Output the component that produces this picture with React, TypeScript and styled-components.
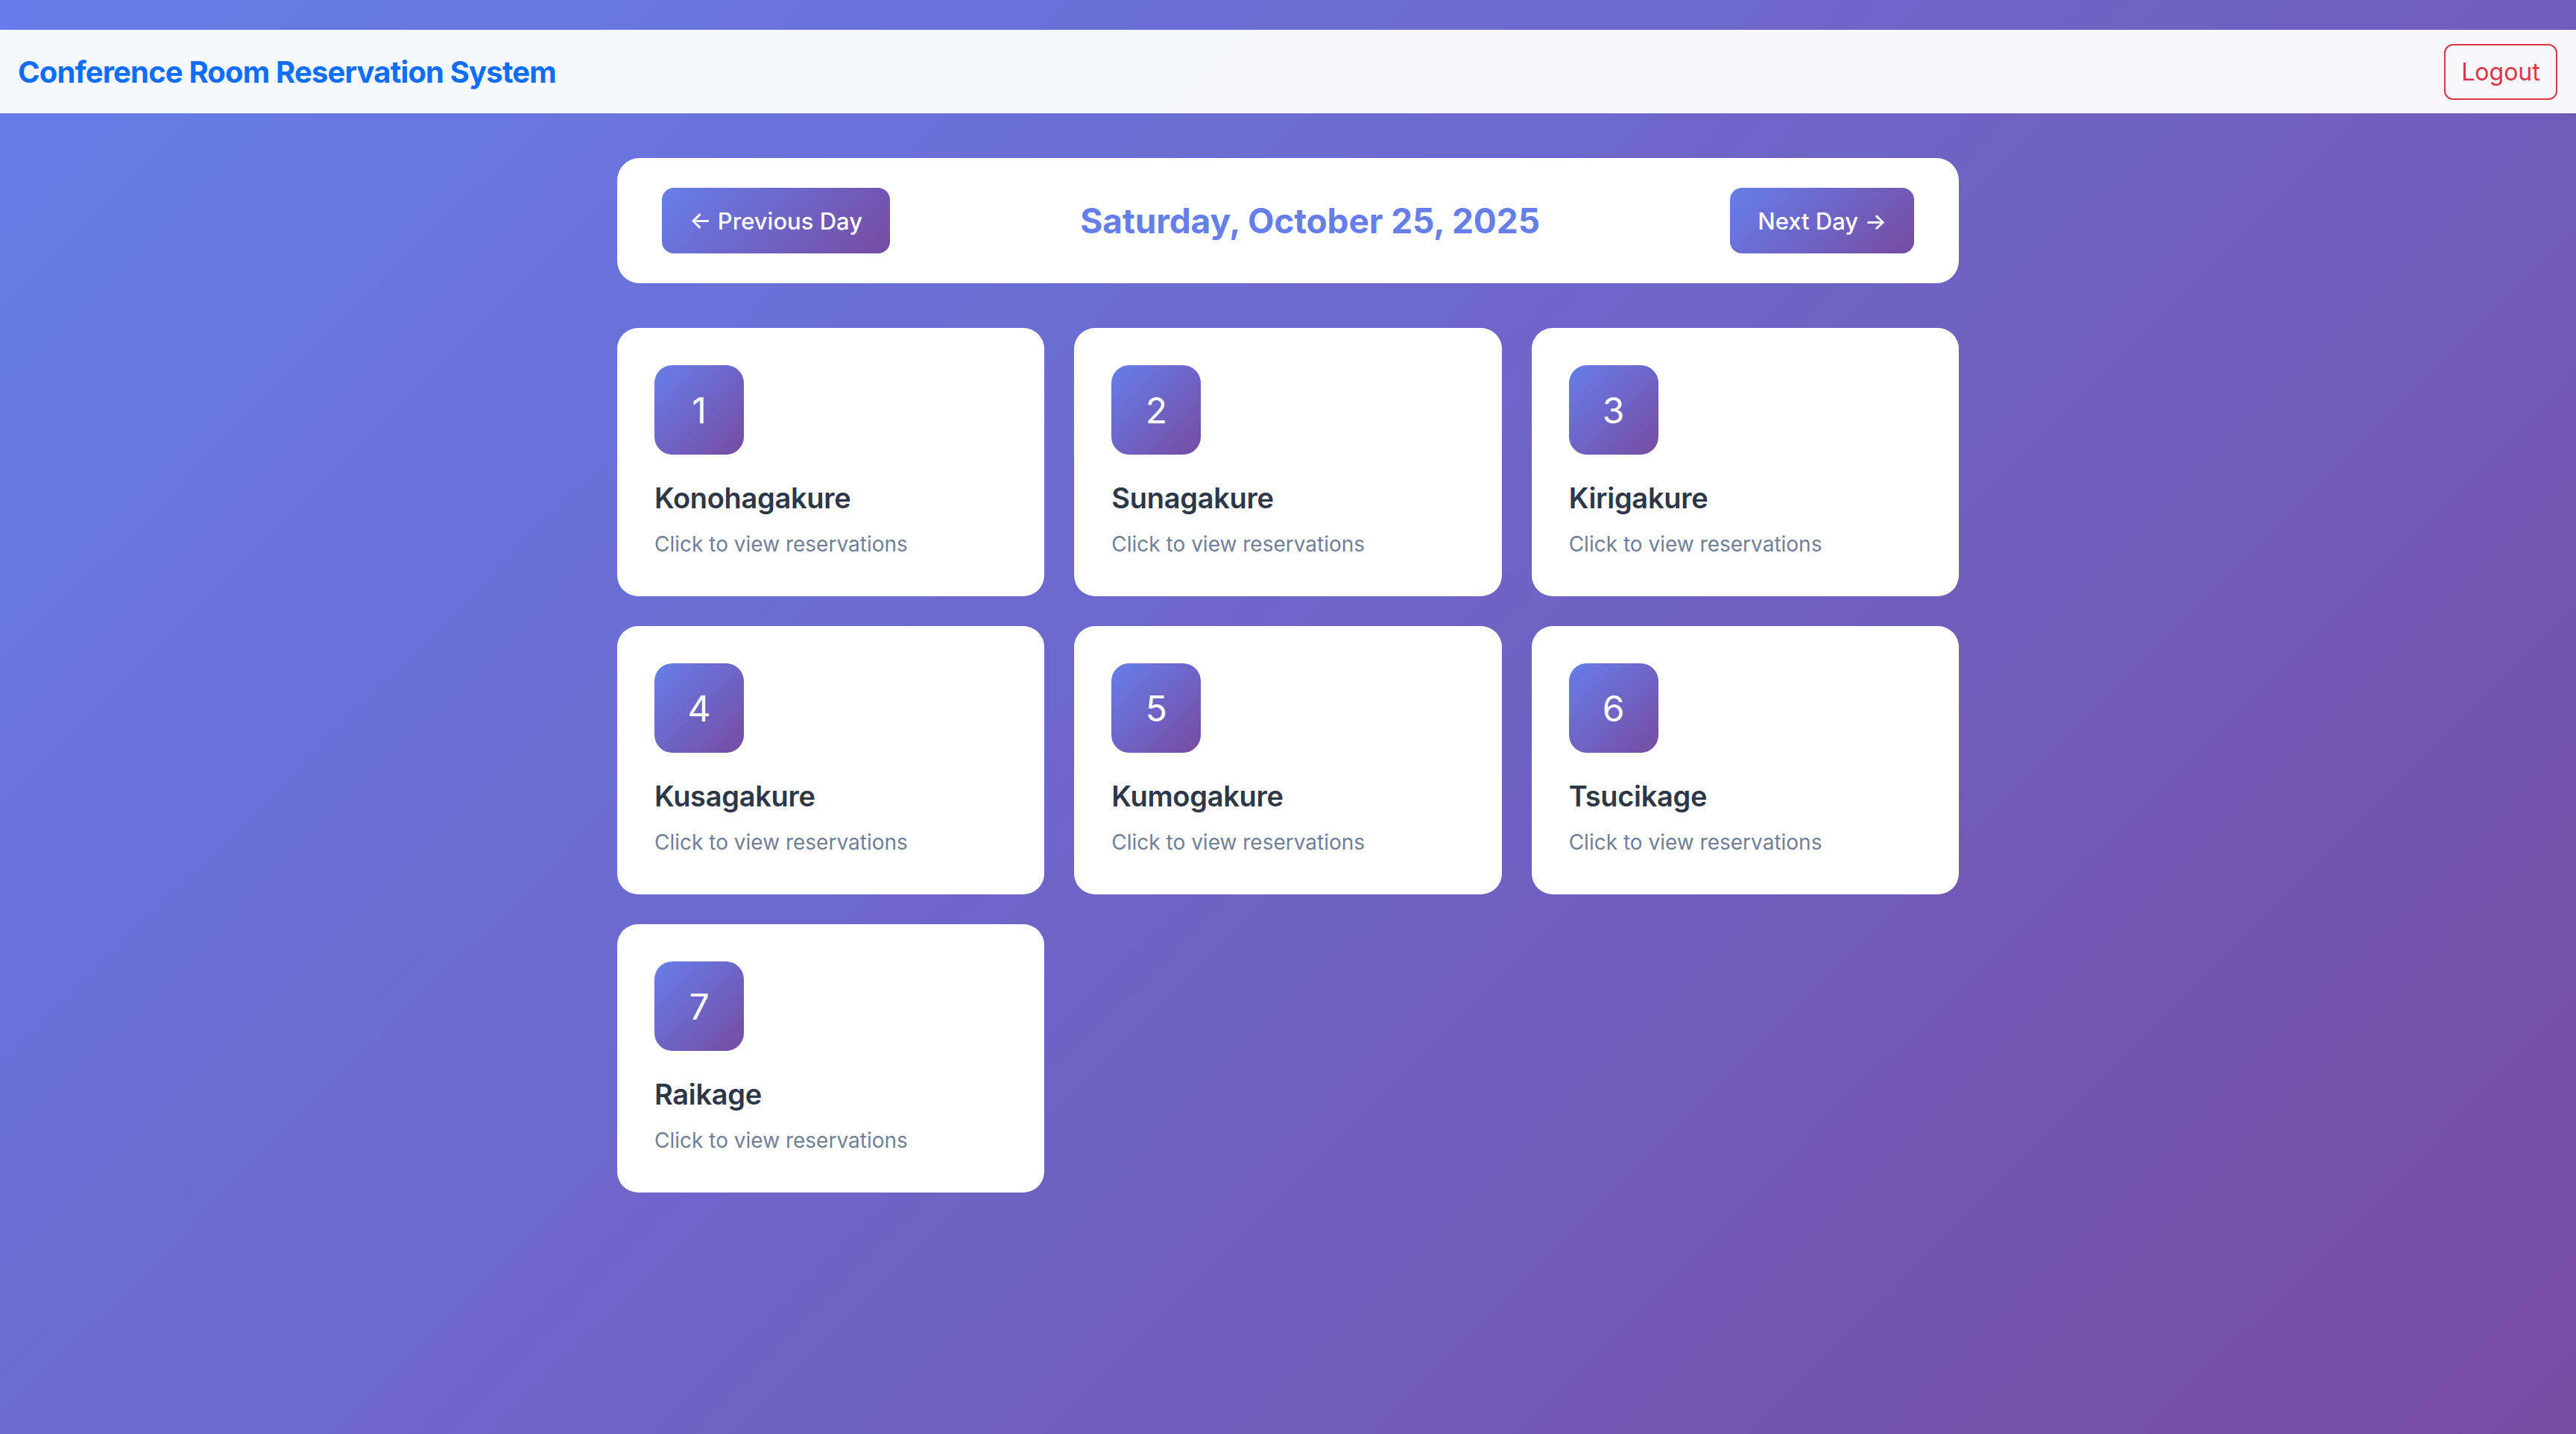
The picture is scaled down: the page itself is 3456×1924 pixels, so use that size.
import * as React from 'react';
import styled, { createGlobalStyle } from 'styled-components';

const GlobalStyle = createGlobalStyle`
  * {
    box-sizing: border-box;
  }
  body {
    margin: 0;
    font-family: Inter, 'Liberation Sans', sans-serif;
  }
`;

const Page = styled.div`
  min-height: 100vh;
  padding-top: 40px;
  background: linear-gradient(135deg, #667eea 0%, #764ba2 100%);
`;

const Header = styled.header`
  height: 112px;
  display: flex;
  align-items: center;
  justify-content: space-between;
  padding: 0 25px 0 24px;
  background-color: rgba(255, 255, 255, 0.95);
`;

const Brand = styled.h1`
  margin: 0;
  font-size: 40px;
  font-weight: 700;
  color: #0d6efd;
  letter-spacing: -0.85px;
`;

const LogoutButton = styled.button`
  width: 152px;
  height: 75px;
  border: 2px solid #dc3545;
  border-radius: 12px;
  background: transparent;
  color: #dc3545;
  font-family: inherit;
  font-size: 32px;
  cursor: pointer;
`;

const Main = styled.main`
  width: 1800px;
  margin: 60px auto 0;
`;

const DateNav = styled.div`
  display: flex;
  align-items: center;
  justify-content: space-between;
  height: 168px;
  padding: 0 60px;
  border-radius: 30px;
  background-color: #ffffff;
`;

const NavButton = styled.button`
  height: 88px;
  padding: 0 37px;
  border: none;
  border-radius: 16px;
  background: linear-gradient(135deg, #667eea 0%, #764ba2 100%);
  color: #ffffff;
  font-family: inherit;
  font-size: 31px;
  font-weight: 500;
  cursor: pointer;
`;

const DateTitle = styled.h2`
  margin: 0;
  font-size: 46px;
  font-weight: 700;
  color: #667eea;
  letter-spacing: -0.1px;
`;

const RoomGrid = styled.div`
  display: grid;
  grid-template-columns: repeat(3, 1fr);
  gap: 40px;
  margin-top: 60px;
`;

const RoomCard = styled.div`
  height: 360px;
  padding: 50px;
  border-radius: 28px;
  background-color: #ffffff;
  cursor: pointer;
`;

const RoomNumber = styled.div`
  width: 120px;
  height: 120px;
  display: flex;
  align-items: center;
  justify-content: center;
  border-radius: 24px;
  background: linear-gradient(135deg, #667eea 0%, #764ba2 100%);
  color: #ffffff;
  font-size: 48px;
  font-weight: 400;
`;

const RoomName = styled.h3`
  margin: 35px 0 0;
  font-size: 38px;
  line-height: 46px;
  font-weight: 600;
  color: #2d3748;
  letter-spacing: -0.3px;
`;

const RoomHint = styled.p`
  margin: 18px 0 0;
  font-size: 28px;
  line-height: 43px;
  color: #718096;
`;

const rooms = [
  'Konohagakure',
  'Sunagakure',
  'Kirigakure',
  'Kusagakure',
  'Kumogakure',
  'Tsucikage',
  'Raikage',
];

const App: React.FC = () => {
  return (
    <Page>
      <GlobalStyle />
      <Header>
        <Brand>Conference Room Reservation System</Brand>
        <LogoutButton>Logout</LogoutButton>
      </Header>
      <Main>
        <DateNav>
          <NavButton>← Previous Day</NavButton>
          <DateTitle>Saturday, October 25, 2025</DateTitle>
          <NavButton>Next Day →</NavButton>
        </DateNav>
        <RoomGrid>
          {rooms.map((name, i) => (
            <RoomCard key={name}>
              <RoomNumber>{i + 1}</RoomNumber>
              <RoomName>{name}</RoomName>
              <RoomHint>Click to view reservations</RoomHint>
            </RoomCard>
          ))}
        </RoomGrid>
      </Main>
    </Page>
  );
};

export default App;
